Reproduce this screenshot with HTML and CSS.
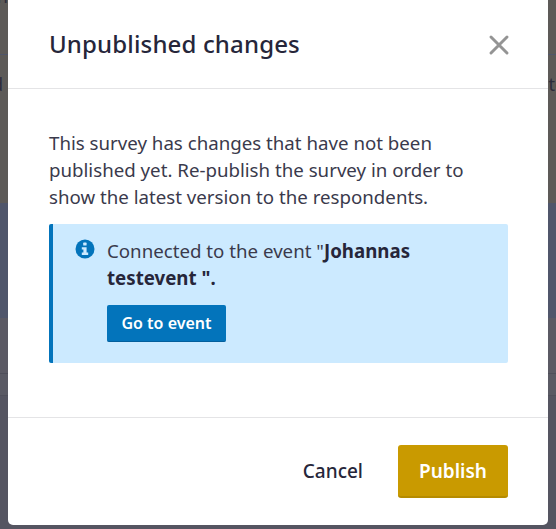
FILE: index.html
```html
<!DOCTYPE html>
<html lang="en">
<head>
    <meta charset="UTF-8">
    <meta name="viewport" content="width=device-width, initial-scale=1.0">
    <title>Unpublished changes</title>
    <link rel="stylesheet" href="styles.css">
</head>
<body>

<div class="backdrop">
    <div class="band-header">
        <div class="page-row page-row-top"><span>in</span><span>e</span></div>
    </div>
    <div class="band-top">
        <div class="page-row"><span>d</span><span>to</span></div>
    </div>
    <div class="band-blue"></div>
    <div class="band-gray"></div>
    <div class="band-low"></div>
    <div class="band-bottom"></div>
</div>

<div class="modal">
    <div class="modal-header">
        <h2>Unpublished changes</h2>
        <button class="close-btn" aria-label="Close">
            <svg width="22" height="22" viewBox="0 0 22 22">
                <path d="M3 3 L19 19 M19 3 L3 19" stroke="#949494" stroke-width="3" stroke-linecap="round" fill="none"/>
            </svg>
        </button>
    </div>

    <div class="modal-body">
        <p>This survey has changes that have not been published yet. Re-publish the survey in order to show the latest version to the respondents.</p>

        <div class="info-box">
            <svg class="info-icon" width="20" height="20" viewBox="0 0 20 20">
                <circle cx="10" cy="10" r="9.5" fill="#0374bb"/>
                <rect x="8.2" y="3.6" width="3.4" height="3" rx="0.6" fill="#cceaff"/>
                <path d="M6.8 8.2 H11.6 V13.6 H13.2 V16 H6.8 V13.6 H8.4 V10.6 H6.8 Z" fill="#cceaff"/>
            </svg>
            <div class="info-content">
                <div class="info-text">Connected to the event "<strong>Johannas testevent ".</strong></div>
                <button class="event-btn">Go to event</button>
            </div>
        </div>
    </div>

    <div class="modal-footer">
        <button class="cancel-btn">Cancel</button>
        <button class="publish-btn">Publish</button>
    </div>
</div>

</body>
</html>
```

FILE: styles.css
```css
body {
    font-family: 'Noto Sans', 'Open Sans', sans-serif;
    background-color: #555561;
    margin: 0;
    height: 529px;
    overflow: hidden;
    color: #26263a;
}
.backdrop {
    position: absolute;
    top: 0;
    left: 0;
    width: 100%;
    height: 100%;
    overflow: hidden;
    display: flex;
    flex-direction: column;
}
.band-header {
    height: 54px;
    background: #5d5a58;
    border-bottom: 1px solid #50566b;
}
.band-top {
    height: 148px;
    background: #5d5a58;
}
.band-blue {
    height: 115px;
    background: #50566b;
}
.band-gray {
    height: 55px;
    background: #5b5a64;
    border-bottom: 1px solid #4f4f5a;
}
.band-low {
    height: 21px;
    background: #5a5a64;
    border-bottom: 1px solid #50505b;
}
.band-bottom {
    flex: 1;
    background: #555561;
}
.page-row {
    display: flex;
    justify-content: space-between;
    margin: 17px -10px 0 -8px;
    font-size: 18px;
    line-height: 24px;
    color: #2c2c3c;
}
.page-row-top {
    margin-top: -16px;
}
.modal {
    position: absolute;
    top: -4px;
    left: 8px;
    width: 540px;
    height: 529px;
    background: #fff;
    border-radius: 5px;
    display: flex;
    flex-direction: column;
}
.modal-header {
    flex: none;
    height: 93px;
    box-sizing: border-box;
    padding: 3px 38px 0 41px;
    border-bottom: 1px solid #e4e4e6;
    display: flex;
    align-items: center;
    justify-content: space-between;
}
h2 {
    margin: 0;
    font-size: 24px;
    font-weight: 500;
    letter-spacing: 0.15px;
    color: #26263a;
}
.close-btn {
    background: none;
    border: none;
    padding: 0;
    margin-top: 3px;
    height: 22px;
    cursor: pointer;
}
.modal-body {
    flex: 1;
    padding: 40px 40px 0 41px;
}
.modal-body p {
    margin: 0 0 14px;
    font-size: 18.7px;
    line-height: 27px;
    color: #3a3a4c;
}
.info-box {
    display: flex;
    gap: 12px;
    background: #cceaff;
    border-left: 4px solid #0374bb;
    border-radius: 2px;
    padding: 13px 22px 20px 22px;
    height: 139px;
    box-sizing: border-box;
}
.info-icon {
    flex: none;
    margin-top: 2px;
}
.info-text {
    font-size: 18.7px;
    line-height: 27px;
    color: #3a3a4c;
}
.info-text strong {
    color: #26263a;
}
.event-btn {
    margin-top: 14px;
    width: 119px;
    height: 37px;
    background: #0374bb;
    border: none;
    border-bottom: 1px solid #035f9c;
    border-radius: 2px;
    color: #fff;
    font-family: inherit;
    font-size: 16px;
    font-weight: 600;
    cursor: pointer;
}
.modal-footer {
    flex: none;
    height: 108px;
    box-sizing: border-box;
    border-top: 1px solid #e4e4e6;
    padding: 27px 40px 0 0;
    display: flex;
    justify-content: flex-end;
    align-items: flex-start;
    gap: 35px;
}
.cancel-btn {
    height: 51px;
    background: none;
    border: none;
    padding: 0;
    color: #26263a;
    font-family: inherit;
    font-size: 19px;
    font-weight: 500;
    cursor: pointer;
}
.publish-btn {
    width: 110px;
    height: 53px;
    background: #c99a00;
    border: none;
    border-bottom: 2px solid #b58b00;
    border-radius: 3px;
    color: #fff;
    font-family: inherit;
    font-size: 19px;
    font-weight: 600;
    cursor: pointer;
}
```
